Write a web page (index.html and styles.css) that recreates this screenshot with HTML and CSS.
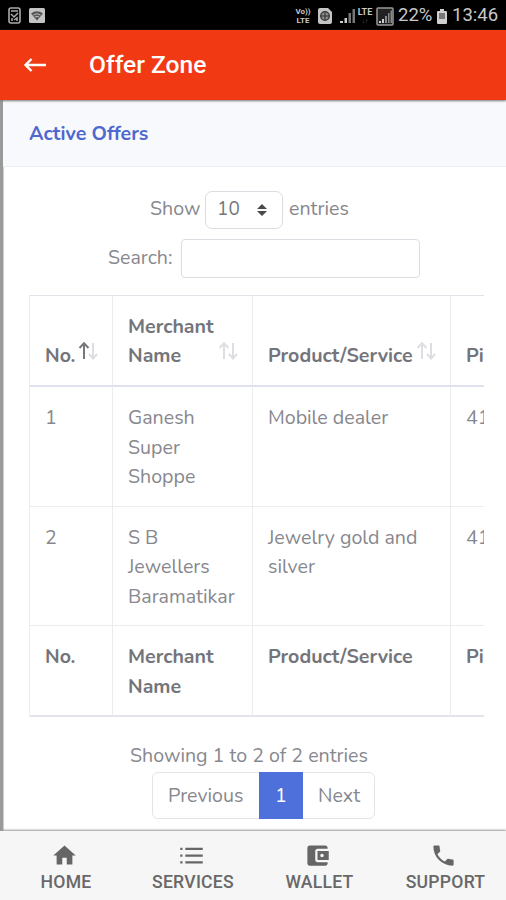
FILE: index.html
```html
<!DOCTYPE html>
<html lang="en">
<head>
<meta charset="utf-8">
<title>Offer Zone</title>
<link rel="stylesheet" href="styles.css">
</head>
<body>
<svg class="defs" width="0" height="0">
  <symbol id="sort" viewBox="0 0 20 20"><path class="up" d="M6 18V3M1.500 7L6 2.200L10.500 7"/><path class="down" d="M15 2v15M11 13l4 4.500L19 13"/></symbol>
</svg>
<div class="status">
  <div class="status-left">
    <svg width="13" height="17" viewBox="0 0 13 17"><rect x="1" y="1" width="11" height="15" rx="2" fill="none" stroke="#aaa" stroke-width="1.600"/><path d="M3 4h7M3 7l3 3 4-4M4 14v-3M9 14v-3l-3 2" fill="none" stroke="#aaa" stroke-width="1.500"/></svg>
    <svg width="16" height="16" viewBox="0 0 16 16"><rect width="16" height="15" rx="1.500" fill="#c4c4c4"/><path d="M2 5.500Q8 1 14 5.500L8 12.500z" fill="#555"/><path d="M4.500 7Q8 4.500 11.500 7M6 9q2-1.300 4 0" stroke="#bbb" fill="none"/></svg>
  </div>
  <div class="status-right">
    <div class="volte"><span>Vo))</span><span>LTE</span></div>
    <svg class="sim" width="14" height="16" viewBox="0 0 14 16"><path d="M2 0h8l4 4v10q0 2-2 2H2q-2 0-2-2V2q0-2 2-2z" fill="#c4c4c4"/><circle cx="7" cy="8" r="4.300" fill="#888" stroke="#333" stroke-width="1.300"/><path d="M3 8h8M7 4v8" stroke="#333"/></svg>
    <svg class="signal" width="16" height="16" viewBox="0 0 16 16"><path d="M0 13h3v2H0zM4.500 10H7v5H4.500z" fill="#ccc"/><path d="M8.500 5H11v10H8.500zM12.500 1H15v14h-2.500z" fill="#777"/></svg>
    <div class="lte"><span>LTE</span><small>↓↑</small></div>
    <svg class="boxed" width="18" height="19" viewBox="0 0 18 19"><rect x="1" y="1" width="16" height="17" rx="1" fill="#222" stroke="#999" stroke-width="1.500"/><path d="M3 14h2v2H3zM6 12h2v4H6z" fill="#ccc"/><path d="M9 9h2v7H9zM12 6h1.500v10H12zM14.500 3.500H16V16h-1.500z" fill="#888"/></svg>
    <span class="percent">22%</span>
    <svg class="battery" width="10" height="15" viewBox="0 0 10 15"><path d="M3 0h4v2h2q1 0 1 1v11q0 1-1 1H1q-1 0-1-1V3q0-1 1-1h2z" fill="#d0d0d0"/><path d="M2 4h6v6H2z" fill="#777"/></svg>
    <span class="clock">13:46</span>
  </div>
</div>
<header class="appbar">
  <svg width="24" height="18" viewBox="0 0 24 18"><path d="M23 9H2.500M8.500 3L2.500 9L8.500 15" fill="none" stroke="#fff" stroke-width="2.400"/></svg>
  <h1>Offer Zone</h1>
</header>
<main class="card">
  <h2 class="card-head"><span>Active Offers</span></h2>
  <div class="card-body">
    <div class="length"><span class="w-show">Show</span><div class="select"><span>10</span><svg width="10" height="12" viewBox="0 0 10 12"><path d="M0 5L5 0l5 5zM0 7l5 5 5-5z" fill="#4a4a4a"/></svg></div><span class="w-entries">entries</span></div>
    <div class="search"><span>Search:</span><div class="input"></div></div>
    <div class="scroll">
      <table>
        <colgroup><col class="c1"><col class="c2"><col class="c3"><col class="c4"></colgroup>
        <thead><tr>
          <th>No.<svg class="sort asc"><use href="#sort"/></svg></th>
          <th>Merchant<br>Name<svg class="sort"><use href="#sort"/></svg></th>
          <th>Product/Service<svg class="sort"><use href="#sort"/></svg></th>
          <th>Pin</th></tr></thead>
        <tbody>
          <tr><td>1</td><td>Ganesh<br>Super<br>Shoppe</td><td>Mobile dealer</td><td>413</td></tr>
          <tr><td>2</td><td>S B<br>Jewellers<br>Baramatikar</td><td>Jewelry gold and<br>silver</td><td>413</td></tr>
        </tbody>
        <tfoot><tr><th>No.</th><th>Merchant<br>Name</th><th>Product/Service</th><th>Pin</th></tr></tfoot>
      </table>
    </div>
    <div class="info">Showing 1 to 2 of 2 entries</div>
    <div class="pager"><span class="prev">Previous</span><span class="page">1</span><span class="next">Next</span></div>
  </div>
</main>
<nav class="tabs">
  <div><svg viewBox="0 0 24 24"><path d="M10 20v-6h4v6h5v-8h3L12 3 2 12h3v8z"/></svg><span>HOME</span></div>
  <div><svg viewBox="0 0 24 24"><path d="M2 5h2v2H2zM2 11h2v2H2zM2 17h2v2H2zM6.500 5H22v2.200H6.500zM6.500 11H22v2.200H6.500zM6.500 17H22v2.200H6.500z"/></svg><span>SERVICES</span></div>
  <div><svg viewBox="0 0 24 24"><path d="M21 18v1c0 1.100-.9 2-2 2H5c-1.110 0-2-.9-2-2V5c0-1.100.89-2 2-2h14c1.100 0 2 .9 2 2v1h-9c-1.110 0-2 .9-2 2v8c0 1.100.89 2 2 2h9zm-9-2h10V8H12v8zm4-2.500c-.83 0-1.500-.67-1.500-1.500s.67-1.500 1.500-1.500 1.500.67 1.500 1.500-.67 1.500-1.500 1.500z"/></svg><span>WALLET</span></div>
  <div><svg viewBox="0 0 24 24"><path d="M6.620 10.790c1.440 2.830 3.760 5.140 6.590 6.590l2.200-2.200c.27-.27.67-.36 1.020-.24 1.120.37 2.330.57 3.570.57.55 0 1 .45 1 1V20c0 .55-.45 1-1 1-9.390 0-17-7.610-17-17 0-.55.45-1 1-1h3.500c.55 0 1 .45 1 1 0 1.250.2 2.450.57 3.570.11.35.03.74-.25 1.020l-2.200 2.200z"/></svg><span>SUPPORT</span></div>
</nav>
</body>
</html>
```
FILE: styles.css
```css
* { box-sizing: border-box; }
body {
  margin: 0;
  width: 506px;
  height: 900px;
  overflow: hidden;
  display: flex;
  flex-direction: column;
  background: #fff;
  font-family: Nunito, Lato, sans-serif;
  font-size: 19.6px;
  line-height: 29.6px;
  color: #87888e;
}
svg { display: block; flex: none; }
.defs { position: absolute; }

.status {
  height: 30px;
  flex: none;
  background: #000;
  display: flex;
  justify-content: space-between;
  padding: 0 8px;
  font-family: Roboto, sans-serif;
  color: #c8c8c8;
}
.status-left { display: flex; gap: 8px; align-items: center; padding-top: 1px; }
.status-right { display: flex; align-items: center; padding-top: 2px; }
.volte, .lte { display: flex; flex-direction: column; font-weight: 700; align-items: center; }
.volte { font-size: 8px; line-height: 9px; width: 16px; }
.sim { margin-left: 7px; }
.signal { margin-left: 8px; }
.lte { font-size: 9px; line-height: 9px; width: 16px; margin-left: 1px; }
.lte small { font-size: 6px; line-height: 7px; color: #666; }
.boxed { margin-left: 3px; }
.percent, .clock { font-size: 18.5px; }
.percent { margin-left: 4px; width: 35px; }
.battery { margin-left: 4px; }
.clock { margin-left: 5px; width: 46px; }

.appbar {
  height: 70px;
  flex: none;
  background: #f13a14;
  display: flex;
  align-items: center;
  padding: 0 23px;
  gap: 42px;
  position: relative;
  box-shadow: 0 1px 2px #777;
}
.appbar h1 {
  margin: 0;
  font: 500 24.6px/30px Roboto, sans-serif;
  color: #fff;
}

.card {
  height: 731px;
  flex: none;
  border-left: 3px solid #9a9a9a;
  box-shadow: inset 1px 0 1px #ccc;
}
.card-head {
  margin: 0;
  height: 67px;
  padding: 19px 0 0 26px;
  font-size: 19.6px;
  line-height: 29px;
  color: #4e68cf;
  background: #f8f9fc;
  border-bottom: 1px solid #edeff5;
}
.card-body { padding: 24px 22px 0 26px; }
.length { display: flex; height: 38px; align-items: center; padding-left: 121px; }
.length > span { margin-top: -2px; }
.w-show { width: 55px; }
.select {
  width: 78px;
  height: 38px;
  border: 1px solid #dcdde3;
  border-radius: 7px;
  display: flex;
  align-items: center;
  justify-content: space-between;
  padding: 0 15px 0 11px;
  font-size: 19px;
  color: #75767d;
}
.w-entries { margin-left: 6px; }
.search { display: flex; margin-top: 10px; height: 39px; align-items: center; padding-left: 79px; }
.search span { width: 73px; white-space: nowrap; margin-top: -2px; }
.input { width: 239px; height: 39px; border: 1px solid #dcdde3; border-radius: 4px; }

.scroll { margin-top: 17px; width: 455px; height: 423px; overflow: hidden; }
table { table-layout: fixed; width: 521px; border-collapse: separate; border-spacing: 0; border-top: 1px solid #e2e3e9; border-left: 1px solid #ebecf0; }
.c1 { width: 83px; }
.c2 { width: 140px; }
.c3 { width: 198px; }
.c4 { width: 99px; }
th, td { text-align: left; vertical-align: top; padding: 16px 0 0 15px; border-right: 1px solid #ebecf0; border-bottom: 1px solid #ebecf0; white-space: nowrap; position: relative; }
th { color: #74757b; }
thead th { height: 91px; vertical-align: bottom; padding: 0 0 14px 15px; border-bottom: 2px solid #dfe1ef; }
td { height: 119.5px; }
tfoot th { height: 91px; border-bottom: 2px solid #e3e4ea; }
.sort { position: absolute; right: 14px; bottom: 24px; width: 20px; height: 20px; fill: none; stroke: #dddee1; stroke-width: 2; }
.sort.asc { --up: #77787c; }
.up { stroke: var(--up, #dddee1); }

.info { margin-top: 23px; padding-left: 101px; }
.pager { display: flex; margin-left: 123px; margin-top: 1px; width: 223px; height: 47px; border: 1px solid #e3e4ea; border-radius: 6px; line-height: 46px; }
.prev { width: 106px; padding-left: 15px; }
.page { width: 44px; height: 47px; margin-top: -1px; line-height: 48px; text-align: center; background: #4d70da; color: #fff; }
.next { padding-left: 15px; }

.tabs {
  flex: 1;
  display: grid;
  grid-template-columns: 132px 122px 131px 121px;
  background: #f6f6f6;
  box-shadow: 0 -1px 2px #999;
  position: relative;
  font: 500 17.6px/22px Roboto, sans-serif;
  letter-spacing: 0.25px;
  color: #686868;
}
.tabs div { display: flex; flex-direction: column; align-items: center; padding-top: 11px; }
.tabs svg { width: 27px; height: 27px; margin-right: 4px; fill: #666; }
.tabs span { margin-top: 2px; }
```
